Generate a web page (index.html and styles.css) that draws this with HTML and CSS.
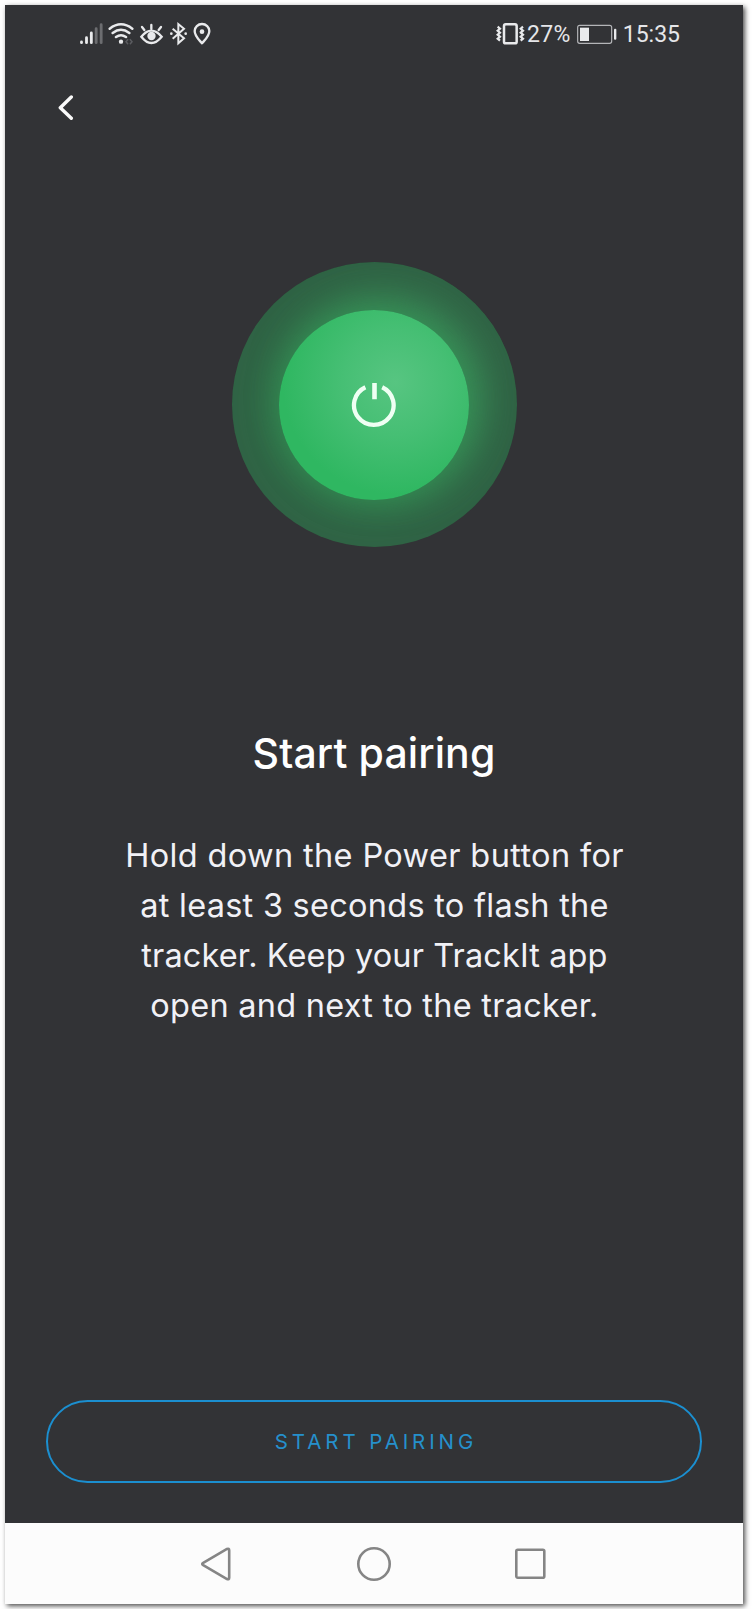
FILE: index.html
```
<!DOCTYPE html>
<html lang="en">
<head>
<meta charset="utf-8">
<title>Start pairing</title>
<link rel="stylesheet" href="styles.css">
</head>
<body>
<div class="phone">
  <header class="status">
    <div class="status-left">
      <svg width="25" height="25" viewBox="30 21 75 75" stroke-linecap="round" stroke-width="8.500" stroke="#e9eaec">
        <path d="M34.5 84v2M49.5 71v15M64 57v29"/><path stroke="#6c6d70" d="M78.500 44v42M93.500 32v54"/>
      </svg>
      <svg width="32" height="25" viewBox="105 21 96 75" fill="none" stroke="#e9eaec" stroke-width="7.500" stroke-linecap="round">
        <path d="M119 44Q153 18 187 44M128 57Q153 38 178 57M138 69Q153 58 168 69"/>
        <circle cx="153" cy="83" r="6.500" fill="#e9eaec" stroke="none"/>
        <path stroke="#5b5c60" stroke-width="4.500" d="M173 77l-5 6 5 6M181 77l5 6-5 6"/>
      </svg>
      <svg width="29" height="25" viewBox="201 21 87 75" fill="none" stroke="#e9eaec" stroke-width="7" stroke-linecap="round">
        <path d="M214 68Q244 32 275 68Q244 106 214 68ZM244 44V33M223 48l-7-9M266 48l7-9"/>
        <circle cx="244.500" cy="66" r="12.500" fill="#e9eaec" stroke="none"/>
      </svg>
      <svg width="24" height="25" viewBox="288 21 72 75" fill="none" stroke="#e9eaec" stroke-width="6">
        <path d="M308 44l34 29-17 15V30l17 14-34 30"/>
        <circle cx="304" cy="59" r="4" fill="#e9eaec" stroke="none"/><circle cx="347" cy="59" r="4" fill="#e9eaec" stroke="none"/>
      </svg>
      <svg width="24" height="25" viewBox="360 21 72 75" fill="none" stroke="#e9eaec" stroke-width="7" stroke-linejoin="round">
        <path d="M396 88C386 76 374 66 374 51a22 21 0 0 1 44 0C418 66 406 76 396 88Z"/>
        <circle cx="396" cy="53" r="7" fill="#e9eaec" stroke="none"/>
      </svg>
    </div>
    <div class="status-right">
      <svg width="29" height="25" viewBox="33 21 87 75" fill="none" stroke="#e9eaec" stroke-width="7.500">
        <rect x="57" y="31" width="38" height="57" rx="5"/>
        <path stroke-width="6.500" d="M38 38l7 6-7 6 7 6-7 6 7 6-7 6 7 6M114 38l-7 6 7 6-7 6 7 6-7 6 7 6-7 6"/>
      </svg>
      <span class="percent">27%</span>
      <svg width="42" height="25" viewBox="273 21 126 75" fill="none">
        <rect x="278" y="34" width="102" height="54" rx="6" stroke="#b4b5b8" stroke-width="3.500"/>
        <rect x="285" y="41" width="27" height="40" fill="#e9eaec"/>
        <rect x="387" y="44" width="7" height="33" rx="3" fill="#e9eaec"/>
      </svg>
      <span class="clock">15:35</span>
    </div>
  </header>
  <div class="toolbar">
    <svg width="16" height="26" viewBox="0 0 16 26" fill="none" stroke="#fafafa" stroke-width="3.400" stroke-linecap="round" stroke-linejoin="round"><path d="M13.300 2L2.300 12.700l11 10.600"/></svg>
  </div>
  <main class="content">
    <div class="halo">
      <div class="power">
        <svg width="48" height="48" viewBox="0 0 48 48" fill="none" stroke="#effff3" stroke-width="4.300"><path d="M15.400 6.200A19.800 19.800 0 1 0 32.200 6.200"/><path stroke-width="4.600" d="M24.500 2v16.300"/></svg>
      </div>
    </div>
    <h1 class="title">Start pairing</h1>
    <p class="copy"><span class="loose">Hold down the Power button for</span><br>at least 3 seconds to flash the<br><span class="tight">tracker. Keep your TrackIt app</span><br>open and next to the tracker.</p>
    <button class="start">START PAIRING</button>
  </main>
  <nav class="nav">
    <svg width="36" height="36" viewBox="0 0 36 36"><path d="M4.200 16.800L28 3Q30.200 2 30.200 4.500V31.500Q30.200 34 28 33L4.200 19.200Q2.200 18 4.200 16.800Z"/></svg>
    <svg width="36" height="36" viewBox="0 0 36 36"><circle cx="18" cy="18" r="15.700"/></svg>
    <svg width="36" height="36" viewBox="0 0 36 36"><rect x="3.300" y="3.700" width="28" height="28" rx="1.500"/></svg>
  </nav>
</div>
</body>
</html>
```
FILE: styles.css
```
* { box-sizing: border-box; }
body { margin: 0; padding: 5px; background: #fff; font-family: Inter, sans-serif; }
.phone {
  width: 738px;
  height: 1599px;
  display: flex;
  flex-direction: column;
  background: #323336;
  box-shadow: 2px 2px 5px rgba(0, 0, 0, .7);
}
.status {
  display: flex;
  justify-content: space-between;
  height: 56px;
  padding: 16px 63px 0 75px;
  font: 23px/25px Roboto, sans-serif;
  color: #e5e6e9;
}
.status-left, .status-right { display: flex; height: 25px; }
.percent { margin: 1px 5px 0 2px; letter-spacing: .3px; }
.clock { margin: 1px 0 0 5px; }
.toolbar { height: 62px; padding: 34px 0 0 53px; }
.toolbar svg { display: block; }
.content {
  flex: 1;
  display: flex;
  flex-direction: column;
  align-items: center;
  padding-top: 139px;
}
.halo {
  width: 285px;
  height: 285px;
  border-radius: 50%;
  display: grid;
  place-items: center;
  overflow: hidden;
  background: #306345;
}
.power {
  width: 190px;
  height: 190px;
  border-radius: 50%;
  display: grid;
  place-items: center;
  background: radial-gradient(circle at 61% 38%, #57c581 0, #46bf74 32%, #2fb761 68%);
  box-shadow: 0 0 42px 5px rgba(48, 165, 88, .65), 12px -10px 40px rgba(75, 160, 105, .5);
}
.title {
  margin: 181px 0 0;
  font-size: 41px;
  line-height: 50px;
  font-weight: 500;
  letter-spacing: .1px;
  color: #fff;
}
.copy {
  margin: 53px 0 0;
  padding-left: 1px;
  font-size: 32.500px;
  line-height: 50px;
  letter-spacing: .26px;
  text-align: center;
  white-space: nowrap;
  color: #f1f1f6;
}
.loose { letter-spacing: .36px; }
.tight { letter-spacing: .12px; }
.start {
  width: 656px;
  height: 83px;
  margin: auto 0 40px;
  padding: 0 0 0 4px;
  border: 2px solid #1b8fd0;
  border-radius: 42px;
  background: none;
  font: 400 20.500px/24px Inter, sans-serif;
  letter-spacing: 3.900px;
  color: #2590cc;
}
.nav {
  height: 81px;
  display: flex;
  justify-content: center;
  align-items: center;
  gap: 121px;
  background: #fcfcfc;
}
.nav svg { fill: none; stroke: #858585; stroke-width: 2.600; }
```
